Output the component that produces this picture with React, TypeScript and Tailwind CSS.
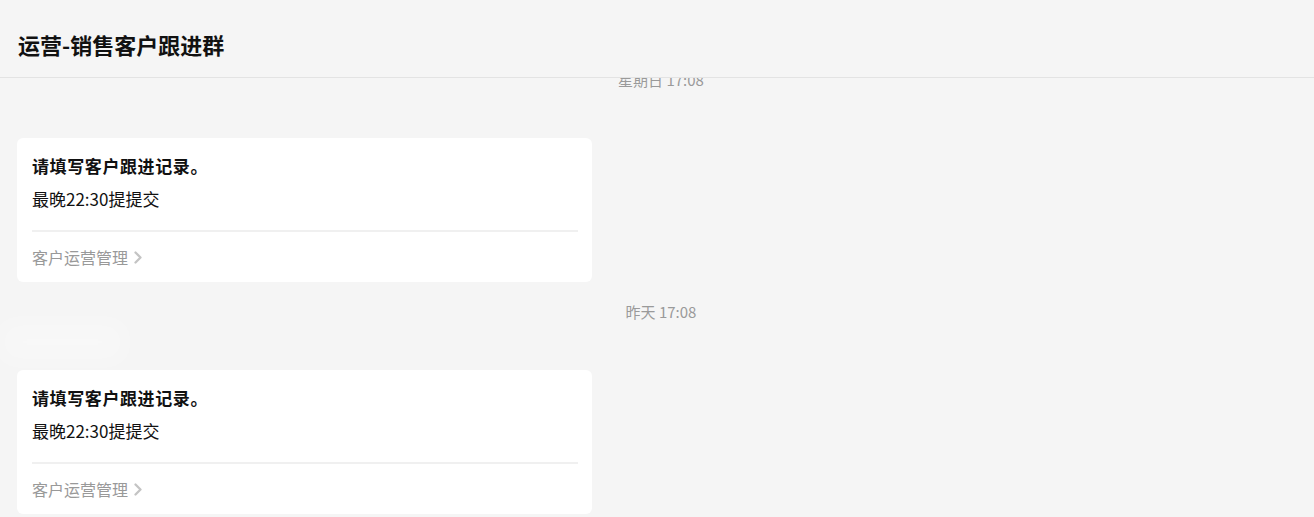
import React from 'react';

type Msg = {
  time: string;
  title: string;
  body: string;
  link: string;
};

const messages: Msg[] = [
  {
    time: '星期日 17:08',
    title: '请填写客户跟进记录。',
    body: '最晚22:30提提交',
    link: '客户运营管理',
  },
  {
    time: '昨天 17:08',
    title: '请填写客户跟进记录。',
    body: '最晚22:30提提交',
    link: '客户运营管理',
  },
];

function Chevron() {
  return (
    <svg
      width="10"
      height="13"
      viewBox="0 0 10 13"
      fill="none"
      className="ml-[5px]"
      aria-hidden="true"
    >
      <path
        d="M2.5 1.5 L7.5 6.5 L2.5 11.5"
        stroke="#c4c4c4"
        strokeWidth="2.3"
        strokeLinecap="round"
        strokeLinejoin="round"
      />
    </svg>
  );
}

function Card({ msg }: { msg: Msg }) {
  return (
    <div className="ml-[17px] w-[575px] rounded-[6px] bg-white pl-[15px] pr-[14px] pt-[16px] pb-[13px]">
      <div className="text-[17px] font-bold leading-[24px] tracking-[0.6px] text-[#111]">
        {msg.title}
      </div>
      <div className="mt-[9px] text-[17px] leading-[24px] text-[#111]">
        {msg.body}
      </div>
      <div className="mt-[19px] h-[2px] bg-[#f0f0f0]" />
      <div className="mt-[13px] flex items-center text-[16px] leading-[24px] text-[#999]">
        {msg.link}
        <Chevron />
      </div>
    </div>
  );
}

export default function App() {
  return (
    <div
      className="relative h-[517px] w-full overflow-hidden bg-[#f5f5f5]"
      style={{ fontFamily: '"Noto Sans CJK SC", "Noto Sans", sans-serif' }}
    >
      <div className="relative z-10 h-[78px] border-b border-[#e3e3e3] bg-[#f5f5f5] px-[18px] pt-[29px]">
        <h1 className="text-[22px] font-bold leading-[30px] text-[#111]">
          运营-销售客户跟进群
        </h1>
      </div>

      <div className="-mt-[8px]">
        {messages.map((m, i) => (
          <div key={i} className={i === 0 ? '' : 'mt-[20px]'}>
            <div className="h-[20px] pl-[8px] text-center text-[15px] leading-[20px] text-[#9a9a9a]">
              {m.time}
            </div>
            <div className="mt-[48px]">
              <Card msg={m} />
            </div>
          </div>
        ))}
      </div>

      <div className="pointer-events-none absolute left-0 top-[322px] h-[40px] w-[125px] bg-white/30 blur-md" />
    </div>
  );
}
